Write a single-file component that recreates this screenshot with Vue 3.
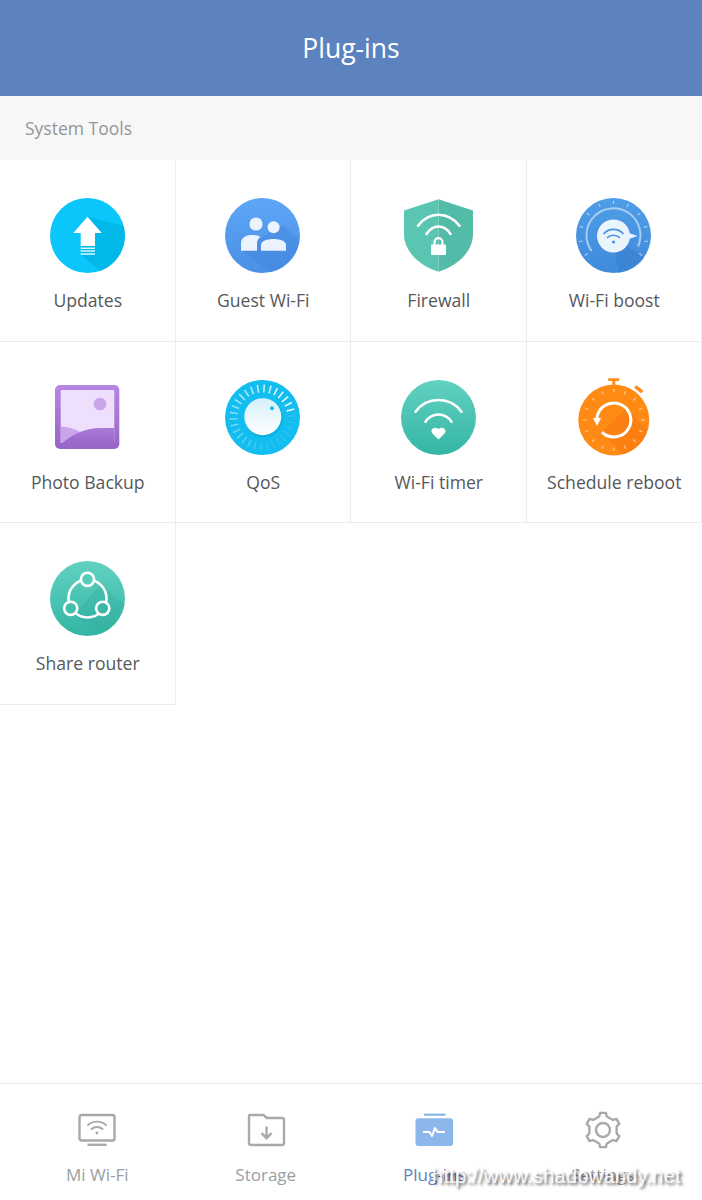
<script setup>
const plugins = [
  { key: 'updates', label: 'Updates' },
  { key: 'guest', label: 'Guest Wi-Fi' },
  { key: 'firewall', label: 'Firewall' },
  { key: 'boost', label: 'Wi-Fi boost' },
  { key: 'photo', label: 'Photo Backup' },
  { key: 'qos', label: 'QoS' },
  { key: 'timer', label: 'Wi-Fi timer' },
  { key: 'reboot', label: 'Schedule reboot' },
  { key: 'share', label: 'Share router' }
]

// dial ticks: angle is clockwise from 12 o'clock
const tick = (cx, cy, r1, r2, deg) => {
  const a = (deg * Math.PI) / 180
  return {
    x1: cx + r1 * Math.sin(a),
    y1: cy - r1 * Math.cos(a),
    x2: cx + r2 * Math.sin(a),
    y2: cy - r2 * Math.cos(a)
  }
}

const boostTicks = []
for (let d = -125; d <= 125; d += 25) boostTicks.push(tick(37.5, 37.5, 31.5, 35, d))

const rebootTicks = []
for (let d = 0; d < 360; d += 22.5) rebootTicks.push(tick(37.8, 40, 27.5, 31, d))

const qosTicks = []
for (let i = 0; i < 30; i++) {
  const t = tick(37.5, 37.5, 25, 33, 75 - i * 12)
  qosTicks.push({ ...t, o: Math.max(0.1, 1 - i * 0.04) })
}

// six-toothed gear outline
const gearPath = (() => {
  const cx = 20
  const cy = 20
  const pts = []
  for (let i = 0; i < 6; i++) {
    const c = i * 60
    const p = [
      [c - 30, 13.6],
      [c - 15, 14.2],
      [c - 9.5, 17.4],
      [c + 9.5, 17.4],
      [c + 15, 14.2]
    ]
    p.forEach(([d, r]) => {
      const a = (d * Math.PI) / 180
      pts.push((cx + r * Math.sin(a)).toFixed(2) + ' ' + (cy - r * Math.cos(a)).toFixed(2))
    })
  }
  return 'M' + pts.join('L') + 'Z'
})()
</script>

<template>
  <div class="page">
    <header class="top-bar">Plug-ins</header>
    <div class="section-title">System Tools</div>

    <!-- shared gradients -->
    <svg class="defs-holder" width="0" height="0">
      <defs>
        <linearGradient id="guestBg" x1="0" y1="0" x2="0" y2="1">
          <stop offset="0" stop-color="#5ea6f6" />
          <stop offset="1" stop-color="#4a90e6" />
        </linearGradient>
        <linearGradient id="boostBg" x1="0" y1="0" x2="0" y2="1">
          <stop offset="0" stop-color="#4f9de8" />
          <stop offset="1" stop-color="#408bdb" />
        </linearGradient>
        <linearGradient id="tealBg" x1="0" y1="0" x2="0" y2="1">
          <stop offset="0" stop-color="#62d1c0" />
          <stop offset="1" stop-color="#34b6a5" />
        </linearGradient>
        <linearGradient id="photoBg" x1="0" y1="0" x2="0" y2="1">
          <stop offset="0" stop-color="#b687e3" />
          <stop offset="1" stop-color="#9864c8" />
        </linearGradient>
        <linearGradient id="hillBg" x1="0" y1="0" x2="0" y2="1">
          <stop offset="0" stop-color="#a97bd8" />
          <stop offset="1" stop-color="#9a66c9" />
        </linearGradient>
        <linearGradient id="knobBg" x1="0" y1="0" x2="0" y2="1">
          <stop offset="0" stop-color="#d6f0fa" />
          <stop offset="1" stop-color="#fff" />
        </linearGradient>
      </defs>
    </svg>

    <div class="grid">
      <div v-for="item in plugins" :key="item.key" class="cell">
        <svg class="plugin-icon" viewBox="0 0 75 75">
          <template v-if="item.key === 'updates'">
            <circle cx="37.5" cy="37.5" r="37.5" fill="#0bc6fb" />
            <path d="M37.5 18.7L73.5 28A37.5 37.5 0 0 1 50 73L30.7 56Z" fill="#02b8e8" />
            <path d="M37.5 18.7L51.7 35H45V48H30.7V35H23.3Z" fill="#fff" />
            <path d="M30.7 50.3H45M30.7 53H45M30.7 56H45" stroke="#d8f6ff" stroke-width="1.4" />
          </template>

          <template v-else-if="item.key === 'guest'">
            <circle cx="37.5" cy="37.5" r="37.5" fill="url(#guestBg)" />
            <path d="M16 52.7L46 74A37.5 37.5 0 0 0 74.5 42L58 27L36 40Z" fill="#3f82da" fill-opacity="0.4" />
            <circle cx="31" cy="26" r="6.6" fill="#eaf3fe" />
            <circle cx="48.6" cy="29.3" r="6" fill="#eaf3fe" />
            <path d="M16 52.7V45C16 40 21 37 26 37C30 37 33 37.5 35.5 39C32.5 41 32 43 32 46V52.7Z" fill="#eaf3fe" />
            <path d="M36 52.7V47C36 43 42 41 48.5 41C55 41 61 43 61 47V52.7Z" fill="#eaf3fe" />
          </template>

          <template v-else-if="item.key === 'firewall'">
            <path d="M37.5 1.3L3 12.5V36C3 54 19 68 37.5 73.7Z" fill="#5ac6b2" />
            <path d="M37.5 1.3L72 12.5V36C72 54 56 68 37.5 73.7Z" fill="#52bca9" />
            <path d="M17 27.7C28 13 47 13 58.5 27.7M25.5 36C32 26 43 26 49.5 36" fill="none" stroke="#fff" stroke-width="2.6" stroke-linecap="round" />
            <path d="M33.5 47V44.5C33.5 38.7 41.5 38.7 41.5 44.5V47" fill="none" stroke="#fff" stroke-width="2.2" />
            <rect x="30" y="46.5" width="15" height="10.5" rx="1" fill="#fff" />
          </template>

          <template v-else-if="item.key === 'boost'">
            <circle cx="37.5" cy="37.5" r="37.5" fill="url(#boostBg)" />
            <path d="M37.5 37.5L68 60A37.5 37.5 0 0 1 42 75Z" fill="#3a82d2" fill-opacity="0.7" />
            <path d="M15.5 53A27 27 0 1 1 62 48.5" fill="none" stroke="#a9cef2" stroke-width="2" />
            <line v-for="(t, i) in boostTicks" :key="i" :x1="t.x1" :y1="t.y1" :x2="t.x2" :y2="t.y2" stroke="#a5ccf2" stroke-width="1.2" />
            <path d="M50 34L61.5 38L50 42Z" fill="#eaf4fd" />
            <circle cx="37.5" cy="38" r="16.5" fill="#eaf4fd" />
            <path d="M28 35.5C33 30 42 30 47 35.5M31.5 39.5C34.5 36.5 40.5 36.5 43.5 39.5" fill="none" stroke="#4795e2" stroke-width="1.7" stroke-linecap="round" />
            <circle cx="37.5" cy="44" r="1.6" fill="#4795e2" />
          </template>

          <template v-else-if="item.key === 'photo'">
            <rect x="5" y="5" width="64.3" height="64" rx="5" fill="url(#photoBg)" />
            <rect x="10.7" y="10" width="53.6" height="53" rx="1" fill="#eedffd" />
            <circle cx="50" cy="24" r="6.3" fill="#cba5ea" />
            <path d="M10.7 46.5C18 47 25 48.5 30 52L15 63H10.7Z" fill="#cba5ea" />
            <path d="M11.5 64C22 54 36 48 50 48H64.3V63.5H11.5Z" fill="url(#hillBg)" />
          </template>

          <template v-else-if="item.key === 'qos'">
            <circle cx="37.5" cy="37.5" r="37.5" fill="#12bdf0" />
            <line v-for="(t, i) in qosTicks" :key="i" :x1="t.x1" :y1="t.y1" :x2="t.x2" :y2="t.y2" stroke="#fff" stroke-width="1.6" :stroke-opacity="t.o" />
            <circle cx="39" cy="38.5" r="19" fill="#0aa0cf" fill-opacity="0.45" />
            <circle cx="37.8" cy="36.7" r="18.5" fill="url(#knobBg)" />
            <circle cx="47" cy="28.3" r="2" fill="#0bbdf0" />
          </template>

          <template v-else-if="item.key === 'timer'">
            <circle cx="37.5" cy="37.5" r="37.5" fill="url(#tealBg)" />
            <path d="M14.5 31.7C26 16 49 16 60.5 31.7M24.5 41.7C31 32 44 32 50.5 41.7" fill="none" stroke="#fff" stroke-width="2.6" stroke-linecap="round" />
            <path d="M37.5 59.5L31.5 53.5C28.5 50 33 45.5 37.5 49C42 45.5 46.5 50 43.5 53.5Z" fill="#fff" />
          </template>

          <template v-else-if="item.key === 'reboot'">
            <rect x="32" y="-1.7" width="11.5" height="2.6" rx="1" fill="#ff8d1c" />
            <rect x="36.3" y="0" width="3" height="6" fill="#ff8d1c" />
            <rect x="58.3" y="7.6" width="9" height="3.4" rx="1" fill="#ff8d1c" transform="rotate(38 62.8 9.3)" />
            <circle cx="37.8" cy="40" r="35.5" fill="#ff8b14" />
            <path d="M50 28L71.5 50A35.5 35.5 0 0 1 46 74.5L26 52Z" fill="#f97a10" fill-opacity="0.7" />
            <line v-for="(t, i) in rebootTicks" :key="i" :x1="t.x1" :y1="t.y1" :x2="t.x2" :y2="t.y2" stroke="#ffc48a" stroke-width="1.3" />
            <path d="M20.9 38.5A17 17 0 1 1 26 52.2" fill="none" stroke="#fff" stroke-width="3" />
            <path d="M17 38H25L21 46Z" fill="#fff" />
          </template>

          <template v-else-if="item.key === 'share'">
            <circle cx="37.5" cy="37.5" r="37.5" fill="url(#tealBg)" />
            <path d="M50 24L74.5 43A37.5 37.5 0 0 1 46 74L24 54Z" fill="#32ad9d" fill-opacity="0.35" />
            <circle cx="37.5" cy="37.5" r="19" fill="none" stroke="#fff" stroke-width="2.6" />
            <circle cx="37.5" cy="18.3" r="6.6" fill="#58ccbb" stroke="#fff" stroke-width="2.6" />
            <circle cx="20.7" cy="47.3" r="6.6" fill="#42bdac" stroke="#fff" stroke-width="2.6" />
            <circle cx="52.7" cy="47.3" r="6.6" fill="#3cb5a4" stroke="#fff" stroke-width="2.6" />
          </template>
        </svg>
        <span class="cell-label">{{ item.label }}</span>
      </div>
    </div>

    <nav class="tab-bar">
      <div class="tab">
        <svg class="tab-icon" viewBox="0 0 40 40" fill="none" stroke="#a9a9a9" stroke-width="2.4">
          <rect x="2.5" y="5" width="35" height="25.5" rx="2" />
          <path d="M10.5 34.8H29.5" stroke-width="2.4" />
          <path d="M11 15C16 10.5 24 10.5 29 15M14.5 19C17.5 16.3 22.5 16.3 25.5 19" stroke-width="1.9" stroke-linecap="round" />
          <circle cx="20" cy="23" r="1.4" fill="#a9a9a9" stroke="none" />
        </svg>
        <span class="tab-label">Mi Wi-Fi</span>
      </div>
      <div class="tab">
        <svg class="tab-icon" viewBox="0 0 40 40" fill="none" stroke="#a9a9a9" stroke-width="2.4">
          <path d="M4 5H17.5L21 8H36C37.5 8 38 9 38 10V33C38 34.5 37 35 36 35H5.5C4 35 3 34 3 33V6C3 5.3 3.3 5 4 5Z" stroke-linejoin="round" />
          <path d="M20.5 16.5V28M15.5 23.2L20.5 28.2L25.5 23.2" />
        </svg>
        <span class="tab-label">Storage</span>
      </div>
      <div class="tab active">
        <svg class="tab-icon" viewBox="0 0 40 40">
          <rect x="1.5" y="8.3" width="37.6" height="27.7" rx="3" fill="#8bb7eb" />
          <rect x="10" y="3.6" width="21.5" height="2.2" fill="#8bb7eb" />
          <path d="M9 22H15.5L18 26L21 18L23.5 22H31" fill="none" stroke="#fff" stroke-width="2" stroke-linejoin="round" />
        </svg>
        <span class="tab-label">Plug-ins</span>
      </div>
      <div class="tab">
        <svg class="tab-icon" viewBox="0 0 40 40" fill="none" stroke="#a9a9a9" stroke-width="2.4">
          <path :d="gearPath" stroke-linejoin="round" />
          <circle cx="20" cy="20" r="7" stroke-width="2.4" />
        </svg>
        <span class="tab-label">Settings</span>
      </div>
    </nav>

    <span class="watermark">http://www.shadowandy.net</span>
  </div>
</template>

<style>
html,
body {
  margin: 0;
  background: #fff;
}
</style>

<style scoped>
.page {
  position: relative;
  width: 702px;
  height: 1200px;
  display: flex;
  flex-direction: column;
  overflow: hidden;
  background: #fff;
  font-family: "Open Sans", "Noto Sans", sans-serif;
}
.defs-holder {
  position: absolute;
}
.top-bar {
  height: 96px;
  flex: none;
  display: flex;
  align-items: center;
  justify-content: center;
  background: #5c83c0;
  color: #fff;
  font-size: 26.5px;
}
.section-title {
  height: 64px;
  flex: none;
  display: flex;
  align-items: center;
  padding-left: 25px;
  background: #f7f7f7;
  color: #92969b;
  font-size: 17.5px;
}
.grid {
  display: grid;
  grid-template-columns: repeat(4, 175.5px);
  grid-auto-rows: 181.5px;
}
.cell {
  box-sizing: border-box;
  display: flex;
  flex-direction: column;
  align-items: center;
  padding-top: 38px;
  border-right: 1px solid #ececec;
  border-bottom: 1px solid #ececec;
}
.plugin-icon {
  width: 75px;
  height: 75px;
  overflow: visible;
}
.cell-label {
  margin-top: 14px;
  padding-left: 1px;
  line-height: 26px;
  color: #55585c;
  font-size: 17.6px;
  white-space: nowrap;
}
.tab-bar {
  margin-top: auto;
  height: 116px;
  flex: none;
  display: flex;
  padding: 0 15px 0 13px;
  border-top: 1px solid #e6e6e6;
}
.tab {
  flex: 1;
  display: flex;
  flex-direction: column;
  align-items: center;
  padding-top: 26px;
}
.tab-icon {
  width: 40px;
  height: 40px;
}
.tab-label {
  margin-top: 13px;
  line-height: 24px;
  color: #9a9ea2;
  font-size: 17px;
}
.tab.active .tab-label {
  color: #5c83c0;
}
.watermark {
  position: absolute;
  left: 432px;
  top: 1164px;
  color: rgba(255, 255, 255, 0.92);
  font-family: "Liberation Sans", sans-serif;
  font-size: 20px;
  line-height: 24px;
  letter-spacing: 0.28px;
  text-shadow: 2px 2px 3px rgba(0, 0, 0, 0.65);
  white-space: nowrap;
}
</style>
